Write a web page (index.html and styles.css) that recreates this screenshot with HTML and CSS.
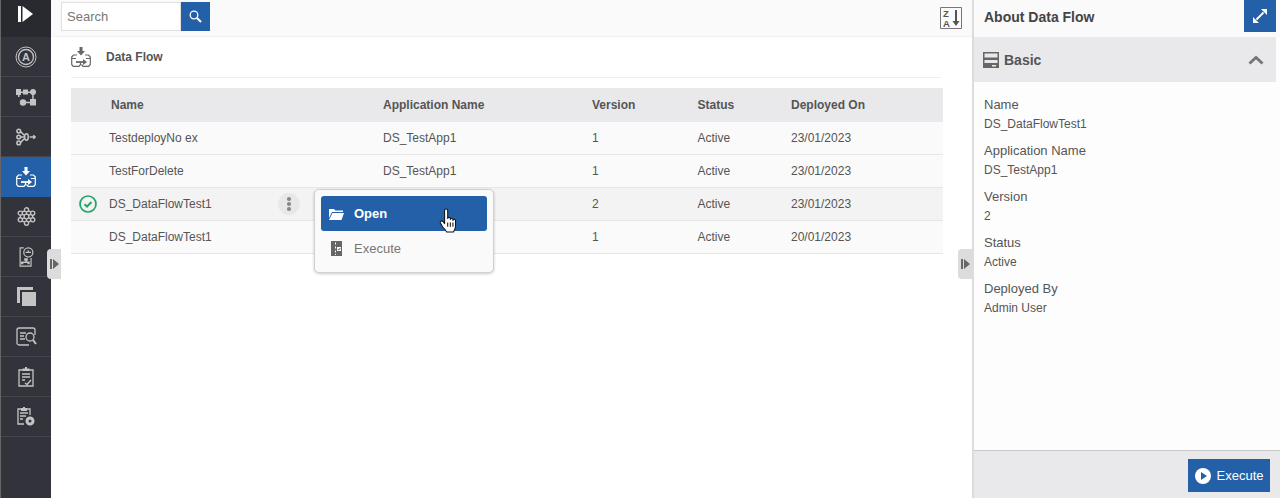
FILE: index.html
```html
<!DOCTYPE html>
<html lang="en">
<head>
    <meta charset="UTF-8">
    <title>Data Flow</title>
    <link rel="stylesheet" href="styles.css">
</head>
<body>
    <div class="app">
        <nav class="sidebar">
            <div class="logo">
                <svg width="15" height="16" viewBox="0 0 15 16"><path fill="#fff" d="M0 0h3v16H0zM4.500 0L15 8 4.500 16z"/></svg>
            </div>
            <a class="nav-item">
                <svg width="22" height="22" viewBox="0 0 22 22" fill="none" stroke="#c4c4c4"><circle cx="11" cy="11" r="10"/><circle cx="11" cy="11" r="7.500" stroke-width="1.300"/><text class="nav-letter" x="11" y="15" text-anchor="middle">A</text></svg>
            </a>
            <a class="nav-item">
                <svg width="20" height="18" viewBox="0 0 20 18" fill="#c4c4c4"><rect x="0" y="1" width="5" height="6"/><rect x="7" y="1.500" width="5" height="5"/><path d="M5 3.500h2v1.500H5zM12 3.500h3v1.500h-3zM2 7h1.500v2H2z"/><circle cx="17" cy="4" r="3"/><circle cx="7" cy="14.500" r="3.200"/><path d="M9 13.800h6v1.500H9zM16.200 6h1.500v6h-1.500z"/><rect x="14" y="11" width="6" height="6.500"/></svg>
            </a>
            <a class="nav-item">
                <svg width="20" height="18" viewBox="0 0 22 18" fill="none" stroke="#c4c4c4" stroke-width="1.700"><circle cx="3" cy="2.500" r="2"/><circle cx="3" cy="9" r="2"/><circle cx="3" cy="15.500" r="2"/><path d="M5 3l4 4M5 9h4M5 15l4-4"/><ellipse cx="11.500" cy="9" rx="2" ry="3.500"/><path d="M15 9h6M19 7l2 2-2 2"/></svg>
            </a>
            <a class="nav-item active">
                <svg width="20" height="20" viewBox="0 0 20 20" fill="none" stroke="#fff" stroke-width="1.200"><path fill="#fff" stroke="none" d="M8.500 0h3v4H14l-4 4.500L6 4h2.500z"/><path d="M6 8H2.500L.7 10v7.500l1.500 1.800H8l1.500-1.800V16M14 8h3.500l1.800 2v7.500l-1.500 1.800H12L10.500 17.500M.7 11.500H5M15 11.500h4.300"/><path stroke-width="1.800" d="M5 15h8"/><path fill="#fff" stroke="none" d="M12 12l4 3-4 3z"/></svg>
            </a>
            <a class="nav-item">
                <svg width="19" height="19" viewBox="0 0 20 20" fill="none" stroke="#c4c4c4" stroke-width="1.400"><path d="M10 3v14M3.500 6.500l13 7M16.500 6.500l-13 7M3.500 6.500v7M16.500 6.500v7M3.500 6.500L10 3l6.500 3.500M3.500 13.500L10 17l6.500-3.500"/><g fill="#32333b"><circle cx="10" cy="10" r="2.500"/><circle cx="10" cy="3" r="2.200"/><circle cx="10" cy="17" r="2.200"/><circle cx="3.500" cy="6.500" r="2.200"/><circle cx="16.500" cy="6.500" r="2.200"/><circle cx="3.500" cy="13.500" r="2.200"/><circle cx="16.500" cy="13.500" r="2.200"/></g></svg>
            </a>
            <a class="nav-item">
                <svg width="15" height="20" viewBox="0 0 16 22" fill="none" stroke="#c4c4c4" stroke-width="1.300"><path d="M5 1H1v20h12v-9"/><circle cx="10" cy="6" r="5"/><path d="M7 6h6M10 3.500V6"/><path fill="#c4c4c4" stroke="none" d="M5.500 12.500h4V15H8.200v1h3.300v3h-2.500v-1.500H4.500V19H2v-3h4.800v-1H5.500z"/></svg>
            </a>
            <a class="nav-item">
                <svg width="19" height="19" viewBox="0 0 19 19" fill="#c4c4c4"><path d="M0 0h16v3H3v13H0z"/><rect x="5" y="5" width="14" height="14"/></svg>
            </a>
            <a class="nav-item">
                <svg width="21" height="19" viewBox="0 0 21 19" fill="none" stroke="#c4c4c4" stroke-width="1.300"><path d="M13 18H3a2 2 0 0 1-2-2V3a2 2 0 0 1 2-2h14a2 2 0 0 1 2 2v5"/><path d="M4 6h6M4 9h4M4 12h5"/><circle cx="14" cy="10" r="4"/><path stroke-width="2" d="M17 13l3 4"/></svg>
            </a>
            <a class="nav-item">
                <svg width="16" height="20" viewBox="0 0 16 20" fill="none" stroke="#c4c4c4" stroke-width="1.300"><path d="M5 3H1v16h14V3h-4"/><path fill="#c4c4c4" stroke="none" d="M7 0h2v1.500h2.500V4h-7V1.500H7z"/><path d="M4 7h8M4 10h8M4 13h3"/><path d="M7 16l2 1.500L13 13"/></svg>
            </a>
            <a class="nav-item">
                <svg width="18" height="19" viewBox="0 0 18 19" fill="none" stroke="#c4c4c4" stroke-width="1.300"><path d="M4 2H1v15h6M10 2h3v6"/><path fill="#c4c4c4" stroke="none" d="M6 0h2v1h2v3H4V1h2z"/><path d="M3 6h8M3 9h6M3 12h3"/><circle cx="13" cy="14" r="3" stroke-width="3"/></svg>
            </a>
        </nav>

        <main class="content">
            <div class="toolbar">
                <div class="search">
                    <input class="search-input" type="text" placeholder="Search">
                    <button class="search-btn">
                        <svg width="13" height="13" viewBox="0 0 13 13" fill="none" stroke="#fff"><circle cx="5" cy="5" r="3.800" stroke-width="1.300"/><path stroke-width="2" d="M8 8l4 4"/></svg>
                    </button>
                </div>
                <div class="sort-btn">
                    <svg width="22" height="22" viewBox="0 0 22 22"><path fill="none" stroke="#777" d="M.5.500h21v21H.5z"/><text class="sort-letter" x="3" y="10">Z</text><text class="sort-letter" x="3" y="19.500">A</text><path fill="#555" d="M15 3h2v11h2.500L16 19l-3.500-5H15z"/></svg>
                </div>
            </div>

            <div class="page-head">
                <svg width="20" height="20" viewBox="0 0 20 20" fill="none" stroke="#666" stroke-width="1.200"><path fill="#666" stroke="none" d="M8.500 0h3v4H14l-4 4.500L6 4h2.500z"/><path d="M6 8H2.500L.7 10v7.500l1.500 1.800H8l1.500-1.800V16M14 8h3.500l1.800 2v7.500l-1.500 1.800H12L10.500 17.500M.7 11.500H5M15 11.500h4.300"/><path stroke-width="1.800" d="M5 15h8"/><path fill="#666" stroke="none" d="M12 12l4 3-4 3z"/></svg>
                <span class="page-title">Data Flow</span>
            </div>

            <div class="grid">
                <div class="row head">
                    <span class="mark"></span><span class="name">Name</span><span>Application Name</span><span>Version</span><span>Status</span><span>Deployed On</span>
                </div>
                <div class="row">
                    <span class="mark"></span><span>TestdeployNo ex</span><span>DS_TestApp1</span><span>1</span><span>Active</span><span>23/01/2023</span>
                </div>
                <div class="row">
                    <span class="mark"></span><span>TestForDelete</span><span>DS_TestApp1</span><span>1</span><span>Active</span><span>23/01/2023</span>
                </div>
                <div class="row selected">
                    <span class="mark">
                        <svg width="18" height="18" viewBox="0 0 18 18" fill="none" stroke="#21a56b" stroke-width="1.700"><circle cx="9" cy="9" r="8"/><path stroke-width="2" d="M5.500 9.200l2.500 2.300 4.500-4.500"/></svg>
                    </span>
                    <span>DS_DataFlowTest1</span><span></span><span>2</span><span>Active</span><span>23/01/2023</span>
                    <div class="more"><i></i><i></i><i></i></div>
                </div>
                <div class="row">
                    <span class="mark"></span><span>DS_DataFlowTest1</span><span></span><span>1</span><span>Active</span><span>20/01/2023</span>
                </div>
            </div>

            <div class="menu">
                <div class="menu-item current">
                    <svg width="15" height="12" viewBox="0 0 15 12" fill="#fff"><path d="M0 1h5l1.500 1.500H14v1.500H3L0 10zM3.500 5H15l-2.500 7H0z"/></svg>
                    Open
                </div>
                <div class="menu-item">
                    <svg width="15" height="15" viewBox="0 0 15 15" fill="#666"><path d="M2 0h11v15H2z"/><path fill="#fafafa" d="M6 1.500h1v2H6zM6 5.500h1v2H6zM6 9.500h1v2H6zM8 6h4v4H8zM6 13h1v1H6z"/><path fill="none" stroke="#666" d="M8.800 8l1 1 1.500-2"/></svg>
                    Execute
                </div>
                <svg class="cursor" width="19" height="25" viewBox="0 0 17.500 24"><path fill="#fff" stroke="#111" stroke-linejoin="round" d="M5 2.500c0-2 3-2 3 0V10c0-1.500 2.500-1.500 2.500 0v1c0-1.500 2.500-1.500 2.500 0v1c0-1.500 2.500-1.500 2.500 0v5c0 3-1 4-2 6H7c-1-2-2-3-4-5l-2-3.500c-.8-1.500 1-3 2.500-1.500L5 15z"/><path stroke="#111" d="M8 14v4M10.500 14v4M13 14v4"/></svg>
            </div>

            <div class="handle handle-left"><svg width="9" height="10" viewBox="0 0 9 10" fill="#666"><path d="M0 0h2v10H0zM3 0l6 5-6 5z"/></svg></div>
            <div class="handle handle-right"><svg width="9" height="10" viewBox="0 0 9 10" fill="#666"><path d="M0 0h2v10H0zM3 0l6 5-6 5z"/></svg></div>
        </main>

        <aside class="about">
            <div class="about-head">
                <span class="about-title">About Data Flow</span>
                <button class="expand-btn">
                    <svg width="14" height="14" viewBox="0 0 14 14" fill="#fff"><path d="M8 0h6v6zM0 8v6h6z"/><path stroke="#fff" stroke-width="1.800" d="M10.500 3.500l-7 7"/></svg>
                </button>
            </div>
            <div class="section-bar">
                <div class="section-title">
                    <svg width="16" height="16" viewBox="0 0 16 16" fill="#666"><path d="M0 0h16v16H0z"/><path fill="#e9e9eb" d="M1.500 1.500h13v4h-13zM1.500 8h13v3h-13zM9 13h4v1.500H9z"/></svg>
                    Basic
                </div>
                <svg width="16" height="10" viewBox="0 0 16 10" fill="none" stroke="#777" stroke-width="3"><path d="M1.500 8.500L8 2.500l6.500 6"/></svg>
            </div>
            <div class="fields">
                <div class="field"><div class="label">Name</div><div class="value">DS_DataFlowTest1</div></div>
                <div class="field"><div class="label">Application Name</div><div class="value">DS_TestApp1</div></div>
                <div class="field"><div class="label">Version</div><div class="value">2</div></div>
                <div class="field"><div class="label">Status</div><div class="value">Active</div></div>
                <div class="field"><div class="label">Deployed By</div><div class="value">Admin User</div></div>
            </div>
            <div class="about-foot">
                <button class="execute-btn">
                    <svg width="16" height="16" viewBox="0 0 16 16"><circle cx="8" cy="8" r="8" fill="#fff"/><path fill="#2360a8" d="M6 4l6 4-6 4z"/></svg>
                    Execute
                </button>
            </div>
        </aside>
    </div>
</body>
</html>
```

FILE: styles.css
```css
html, body {
    height: 100%;
    margin: 0;
    overflow: hidden;
    background-color: #fff;
    font-family: "Liberation Sans", Arial, sans-serif;
    color: #555;
}
.app {
    display: flex;
    height: 100%;
}

/* left nav */
.sidebar {
    width: 50px;
    flex: none;
    border-left: 1px solid #666;
    background-color: #32333b;
}
.logo {
    height: 37px;
    box-sizing: border-box;
    padding: 6px 1px 0 0;
    display: flex;
    align-items: flex-start;
    justify-content: center;
    background-color: #292a2f;
}
.nav-item {
    height: 39px;
    display: flex;
    align-items: center;
    justify-content: center;
    border-bottom: 1px solid #45464d;
}
.nav-item.active {
    background-color: #2360a8;
    border-bottom-color: #2360a8;
}
.nav-letter {
    fill: #c4c4c4;
    stroke: none;
    font-size: 11px;
    font-weight: bold;
}

/* middle column */
.content {
    position: relative;
    flex: 1;
    min-width: 0;
}
.toolbar {
    height: 37px;
    display: flex;
    align-items: flex-start;
    justify-content: space-between;
    padding: 2px 10px 0 10px;
    box-sizing: border-box;
    background-color: #fafafa;
    border-bottom: 1px solid #f0f0f2;
}
.search {
    display: flex;
}
.search-input {
    width: 120px;
    height: 29px;
    box-sizing: border-box;
    padding: 0 5px;
    border: 1px solid #e0e0e0;
    background-color: #fff;
    font-family: inherit;
    font-size: 13px;
    outline: none;
}
.search-input::placeholder {
    color: #777;
    opacity: 1;
}
.search-btn {
    width: 29px;
    height: 29px;
    padding: 0;
    border: 0;
    background-color: #2360a8;
    display: flex;
    align-items: center;
    justify-content: center;
}
.sort-btn {
    margin-top: 5px;
    line-height: 0;
}
.sort-letter {
    fill: #555;
    font-size: 9.500px;
    font-weight: bold;
}
.page-head {
    height: 40px;
    margin: 0 31px 0 20px;
    display: flex;
    align-items: center;
    gap: 15px;
    border-bottom: 1px solid #eeeeef;
}
.page-title {
    font-size: 12px;
    font-weight: bold;
    color: #555;
}
.grid {
    margin: 10px 29px 0 20px;
    font-size: 12px;
}
.row {
    position: relative;
    height: 33px;
    box-sizing: border-box;
    display: grid;
    grid-template-columns: 38px 274px 209px 105.500px 93.500px 1fr;
    align-items: center;
    background-color: #fafafa;
    border-bottom: 1px solid #e6e6e6;
    color: #555;
}
.row.head {
    height: 34px;
    background-color: #e9e9eb;
    border-bottom: 0;
    font-weight: bold;
}
.row.head .name {
    padding-left: 2px;
}
.row.selected {
    background-color: #f3f3f3;
}
.mark {
    display: flex;
    padding-left: 8px;
}
.more {
    position: absolute;
    left: 207px;
    top: 5px;
    width: 22px;
    height: 22px;
    border-radius: 50%;
    background-color: #e6e8ea;
    display: flex;
    flex-direction: column;
    align-items: center;
    justify-content: center;
    gap: 1.500px;
}
.more i {
    width: 3.500px;
    height: 3.500px;
    border-radius: 50%;
    background-color: #8a8a8a;
}
.menu {
    position: absolute;
    left: 263px;
    top: 189px;
    width: 180px;
    height: 84px;
    box-sizing: border-box;
    padding: 6px;
    background-color: #fafafa;
    border: 1px solid #d0d0d0;
    border-radius: 5px;
    box-shadow: 0 1px 3px rgba(0, 0, 0, 0.2);
}
.menu-item {
    height: 35px;
    display: flex;
    align-items: center;
    gap: 10px;
    padding-left: 8px;
    border-radius: 3px;
    font-size: 13px;
    color: #777;
}
.menu-item.current {
    background-color: #2360a8;
    color: #fff;
    font-weight: bold;
}
.cursor {
    position: absolute;
    left: 124px;
    top: 18px;
}
.handle {
    position: absolute;
    top: 249px;
    width: 14px;
    height: 30px;
    background-color: #dcdcdc;
    border-radius: 4px 0 0 4px;
    display: flex;
    align-items: center;
    justify-content: center;
}
.handle-left {
    left: -4px;
}
.handle-right {
    right: 0;
}

/* right panel */
.about {
    width: 306px;
    flex: none;
    display: flex;
    flex-direction: column;
    border-left: 2px solid #dcdcdc;
    background-color: #fdfdfd;
}
.about-head {
    height: 37px;
    padding-left: 10px;
    padding-right: 4px;
    display: flex;
    justify-content: space-between;
    align-items: flex-start;
    box-sizing: border-box;
    background-color: #fafafa;
}
.about-title {
    margin-top: 9px;
    font-size: 14px;
    font-weight: bold;
    color: #444;
}
.expand-btn {
    width: 32px;
    height: 32px;
    padding: 0;
    border: 0;
    background-color: #2360a8;
    display: flex;
    align-items: center;
    justify-content: center;
}
.section-bar {
    height: 45px;
    margin-right: 4px;
    padding: 0 12px 0 9px;
    display: flex;
    align-items: center;
    justify-content: space-between;
    background-color: #e9e9eb;
}
.section-title {
    display: flex;
    align-items: center;
    gap: 5px;
    font-size: 14px;
    font-weight: bold;
    color: #555;
}
.fields {
    flex: 1;
    padding: 15px 10px 0 10px;
}
.field {
    height: 46px;
}
.label {
    font-size: 13px;
    line-height: 16px;
    color: #555;
}
.value {
    margin-top: 4px;
    font-size: 12px;
    line-height: 14px;
    color: #555;
}
.about-foot {
    height: 48px;
    box-sizing: border-box;
    padding: 8px 10px 0 0;
    display: flex;
    justify-content: flex-end;
    background-color: #e9e9eb;
    border-top: 1px solid #c8c8c8;
}
.execute-btn {
    width: 82px;
    height: 33px;
    padding: 0;
    border: 0;
    display: flex;
    align-items: center;
    justify-content: center;
    gap: 6px;
    background-color: #2360a8;
    color: #fff;
    font-family: inherit;
    font-size: 13px;
}
```
